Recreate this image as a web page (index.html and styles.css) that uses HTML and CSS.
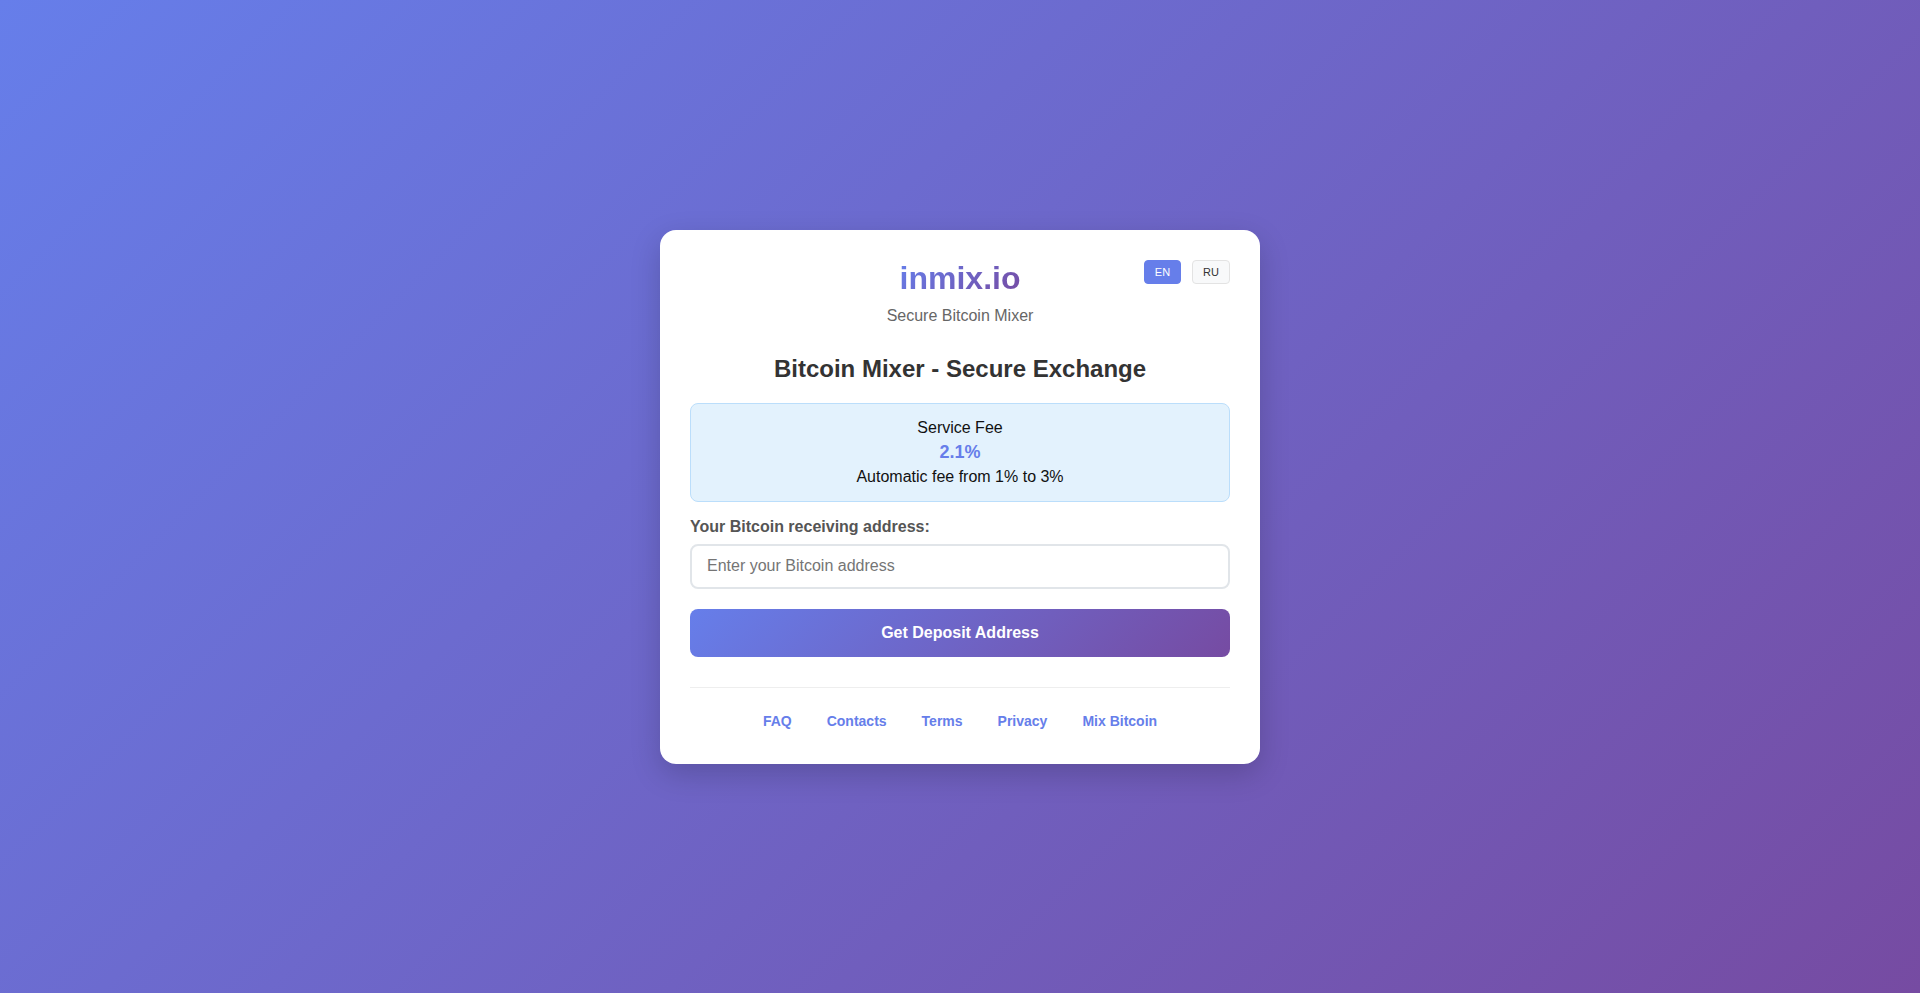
FILE: index.html
```html
<!DOCTYPE html>
<html lang="en">
<head>
<meta charset="utf-8">
<title>inmix.io - Secure Bitcoin Mixer</title>
<link rel="stylesheet" href="styles.css">
</head>
<body>
<main class="page">
  <section class="card">
    <div class="lang">
      <button class="lang-btn active">EN</button>
      <button class="lang-btn">RU</button>
    </div>
    <header class="header">
      <h1 class="logo">inmix.io</h1>
      <p class="tagline">Secure Bitcoin Mixer</p>
    </header>
    <h2 class="heading">Bitcoin Mixer - Secure Exchange</h2>
    <div class="fee">
      <div class="fee-label">Service Fee</div>
      <div class="fee-value">2.1%</div>
      <div class="fee-note">Automatic fee from 1% to 3%</div>
    </div>
    <form class="form">
      <label class="label" for="addr">Your Bitcoin receiving address:</label>
      <input class="input" id="addr" type="text" placeholder="Enter your Bitcoin address">
      <button class="submit" type="button">Get Deposit Address</button>
    </form>
    <footer class="footer">
      <nav class="links">
        <a href="#">FAQ</a>
        <a href="#">Contacts</a>
        <a href="#">Terms</a>
        <a href="#">Privacy</a>
        <a href="#">Mix Bitcoin</a>
      </nav>
    </footer>
  </section>
</main>
</body>
</html>
```
FILE: styles.css
```css
* { box-sizing: border-box; }
html, body { margin: 0; padding: 0; height: 100%; }
body {
  font-family: "Liberation Sans", Arial, sans-serif;
  background: linear-gradient(135deg, #667eea 0%, #764ba2 100%);
  min-height: 993px;
  color: #333;
}
.page {
  min-height: 993px;
  display: flex;
  align-items: center;
  justify-content: center;
}
.card {
  position: relative;
  width: 600px;
  background: #fff;
  border-radius: 16px;
  padding: 30px;
  box-shadow: 0 10px 30px rgba(0, 0, 0, 0.18);
  margin-top: 0;
}
.lang {
  position: absolute;
  top: 30px;
  right: 30px;
  display: flex;
  gap: 11px;
}
.lang-btn {
  font-family: "Liberation Sans", Arial, sans-serif;
  font-size: 11px;
  padding: 5px 10px;
  border: 1px solid #e3e3e3;
  border-radius: 4px;
  background: #f8f9fa;
  color: #333;
  line-height: normal;
}
.lang-btn.active {
  background: #667eea;
  border-color: #667eea;
  color: #fff;
}
.header { text-align: center; margin-bottom: 30px; }
.logo {
  margin: 0 0 10px;
  font-size: 32px;
  font-weight: bold;
  background: linear-gradient(135deg, #667eea 0%, #764ba2 100%);
  -webkit-background-clip: text;
  background-clip: text;
  color: transparent;
  display: inline-block;
}
.tagline { margin: 0; font-size: 16px; color: #666; }
.heading {
  margin: 0 0 20px;
  text-align: center;
  font-size: 24px;
  font-weight: bold;
  color: #333;
}
.fee {
  background: #e3f2fd;
  border: 1px solid #bbdefb;
  border-radius: 8px;
  padding: 15px;
  text-align: center;
  font-size: 16px;
  color: #111;
  margin-bottom: 16px;
}
.fee-value {
  margin: 5px 0;
  font-size: 18px;
  font-weight: bold;
  color: #667eea;
}
.form { display: flex; flex-direction: column; }
.label {
  display: block;
  font-size: 16px;
  font-weight: bold;
  color: #555;
  margin-bottom: 8px;
}
.input {
  width: 100%;
  height: 45px;
  padding: 0 15px;
  font-family: "Liberation Sans", Arial, sans-serif;
  font-size: 16px;
  border: 2px solid #e1e5e9;
  border-radius: 8px;
  color: #333;
  outline: none;
}
.input::placeholder { color: #757575; }
.submit {
  margin-top: 20px;
  width: 100%;
  padding: 15px;
  font-family: "Liberation Sans", Arial, sans-serif;
  font-size: 16px;
  font-weight: bold;
  color: #fff;
  border: none;
  border-radius: 8px;
  background: linear-gradient(135deg, #667eea 0%, #764ba2 100%);
  line-height: normal;
}
.footer {
  margin-top: 30px;
  border-top: 1px solid #eee;
  padding-top: 20px;
}
.links {
  display: flex;
  justify-content: center;
  gap: 35px;
}
.links a {
  display: block;
  padding: 5px 0;
  font-size: 14px;
  font-weight: bold;
  color: #667eea;
  text-decoration: none;
}
```
